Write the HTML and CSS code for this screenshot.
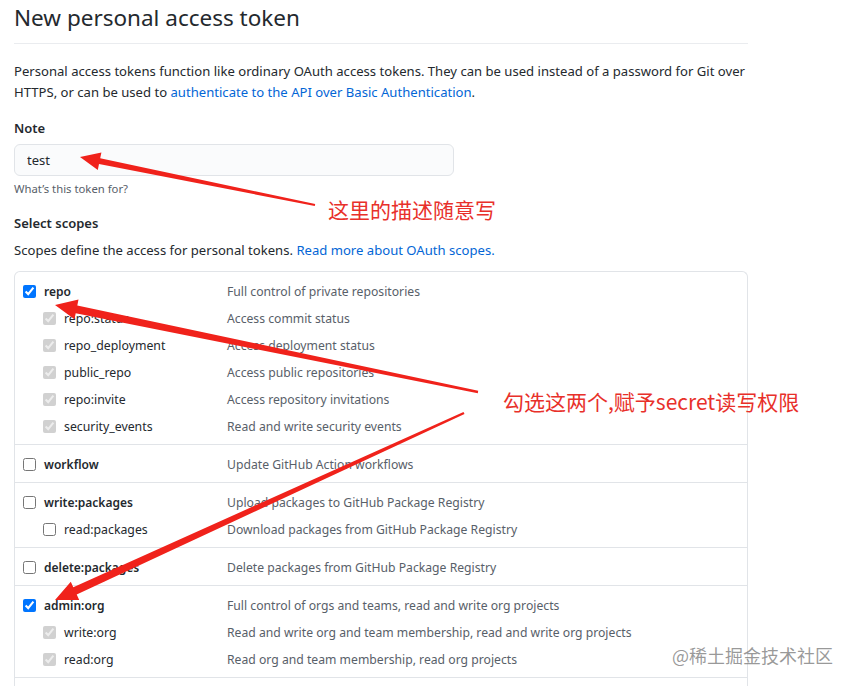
FILE: index.html
```html
<!DOCTYPE html>
<html lang="en">
<head>
    <meta charset="UTF-8">
    <title>New personal access token</title>
    <link rel="stylesheet" href="styles.css">
</head>
<body>
<div class="page">
    <h1 class="title">New personal access token</h1>
    <p class="intro">Personal access tokens function like ordinary OAuth access tokens. They can be used instead of a password for Git over HTTPS, or can be used to <a href="#">authenticate to the API over Basic Authentication</a>.</p>

    <label class="label" for="note">Note</label>
    <input id="note" class="note-input" type="text" value="test">
    <p class="hint">What’s this token for?</p>

    <h3 class="label scopes-title">Select scopes</h3>
    <p class="scopes-desc">Scopes define the access for personal tokens. <a href="#">Read more about OAuth scopes.</a></p>

    <div class="scopes">
        <div class="group">
            <div class="row"><span class="name top"><input type="checkbox" checked>repo</span><span class="desc">Full control of private repositories</span></div>
            <div class="row"><span class="name sub"><input type="checkbox" checked disabled>repo:status</span><span class="desc">Access commit status</span></div>
            <div class="row"><span class="name sub"><input type="checkbox" checked disabled>repo_deployment</span><span class="desc">Access deployment status</span></div>
            <div class="row"><span class="name sub"><input type="checkbox" checked disabled>public_repo</span><span class="desc">Access public repositories</span></div>
            <div class="row"><span class="name sub"><input type="checkbox" checked disabled>repo:invite</span><span class="desc">Access repository invitations</span></div>
            <div class="row"><span class="name sub"><input type="checkbox" checked disabled>security_events</span><span class="desc">Read and write security events</span></div>
        </div>
        <div class="group">
            <div class="row"><span class="name top"><input type="checkbox">workflow</span><span class="desc">Update GitHub Action workflows</span></div>
        </div>
        <div class="group">
            <div class="row"><span class="name top"><input type="checkbox">write:packages</span><span class="desc">Upload packages to GitHub Package Registry</span></div>
            <div class="row"><span class="name sub"><input type="checkbox">read:packages</span><span class="desc">Download packages from GitHub Package Registry</span></div>
        </div>
        <div class="group">
            <div class="row"><span class="name top"><input type="checkbox">delete:packages</span><span class="desc">Delete packages from GitHub Package Registry</span></div>
        </div>
        <div class="group">
            <div class="row"><span class="name top"><input type="checkbox" checked>admin:org</span><span class="desc">Full control of orgs and teams, read and write org projects</span></div>
            <div class="row"><span class="name sub"><input type="checkbox" checked disabled>write:org</span><span class="desc">Read and write org and team membership, read and write org projects</span></div>
            <div class="row"><span class="name sub"><input type="checkbox" checked disabled>read:org</span><span class="desc">Read org and team membership, read org projects</span></div>
        </div>
        <div class="group"></div>
    </div>
</div>

<!-- 标注 -->
<svg class="arrows" width="853" height="686" viewBox="0 0 853 686">
    <polygon points="315.2,204 100.2,158.3 101.4,152.4 80,157 97.8,170 99,164.1 314.8,206"/>
    <polygon points="478.2,390.8 77.3,305.5 78.5,299.6 55,305 74.5,319.2 75.7,313.3 477.8,393.2"/>
    <polygon points="463.5,411.9 73.3,587.2 70.8,581.7 55,600 79.2,599.9 76.7,594.4 464.5,414.1"/>
</svg>
<div class="note note-1">这里的描述随意写</div>
<div class="note note-2">勾选这两个,赋予secret读写权限</div>
<div class="watermark">@稀土掘金技术社区</div>
</body>
</html>
```

FILE: styles.css
```css
*{
    padding: 0;
    margin: 0;
    box-sizing: border-box;
}
body{
    font-family: "Noto Sans", "Noto Sans CJK SC", sans-serif;
    font-size: 13.1px;
    color: #24292e;
    background: #fff;
    overflow: hidden;
}
a{
    color: #0366d6;
    text-decoration: none;
}
.page{
    width: 748px;
    padding-left: 14px;
}
.title{
    font-size: 22.5px;
    font-weight: 400;
    line-height: 36px;
    padding-bottom: 7px;
    border-bottom: 1px solid #eaecef;
}
.intro{
    margin-top: 17px;
    line-height: 21px;
}
.label{
    display: block;
    margin-top: 15px;
    font-size: 13px;
    font-weight: 600;
    line-height: 21px;
}
.note-input{
    display: block;
    margin-top: 5px;
    width: 440px;
    height: 32px;
    padding: 0 12px;
    font-family: inherit;
    font-size: 13px;
    color: #24292e;
    background: #fafbfc;
    border: 1px solid #e1e4e8;
    border-radius: 6px;
}
.hint{
    margin-top: 4px;
    font-size: 11.3px;
    line-height: 18px;
    color: #586069;
}
.scopes-title{
    margin-top: 15px;
}
.scopes-desc{
    margin-top: 6px;
    line-height: 21px;
}
.scopes{
    margin-top: 10px;
    border: 1px solid #e1e4e8;
    border-bottom: none;
    border-radius: 6px 6px 0 0;
    height: 420px;
}
.group{
    padding: 6px 0 4px;
    border-bottom: 1px solid #e1e4e8;
}
.row{
    display: flex;
    line-height: 27px;
    height: 27px;
}
.name{
    display: flex;
    align-items: center;
    width: 212px;
    flex-shrink: 0;
    font-size: 12.3px;
}
.name.top{
    font-weight: 600;
    font-size: 12px;
    padding-left: 8px;
}
.name.sub{
    padding-left: 28px;
}
.name input{
    width: 13px;
    height: 13px;
    margin: 0 8px 0 0;
}
.desc{
    font-size: 12.2px;
    color: #586069;
}
.arrows{
    position: absolute;
    left: 0;
    top: 0;
    fill: #f0221b;
}
.note{
    position: absolute;
    font-family: "Noto Sans CJK SC", sans-serif;
    font-size: 21px;
    color: #e8302a;
    line-height: 28px;
}
.note-1{
    left: 328px;
    top: 195px;
}
.note-2{
    left: 503px;
    top: 387px;
}
.watermark{
    position: absolute;
    left: 672px;
    top: 642px;
    font-family: "Noto Sans CJK SC", sans-serif;
    font-size: 18px;
    line-height: 26px;
    color: rgba(120, 120, 120, 0.75);
}
```
